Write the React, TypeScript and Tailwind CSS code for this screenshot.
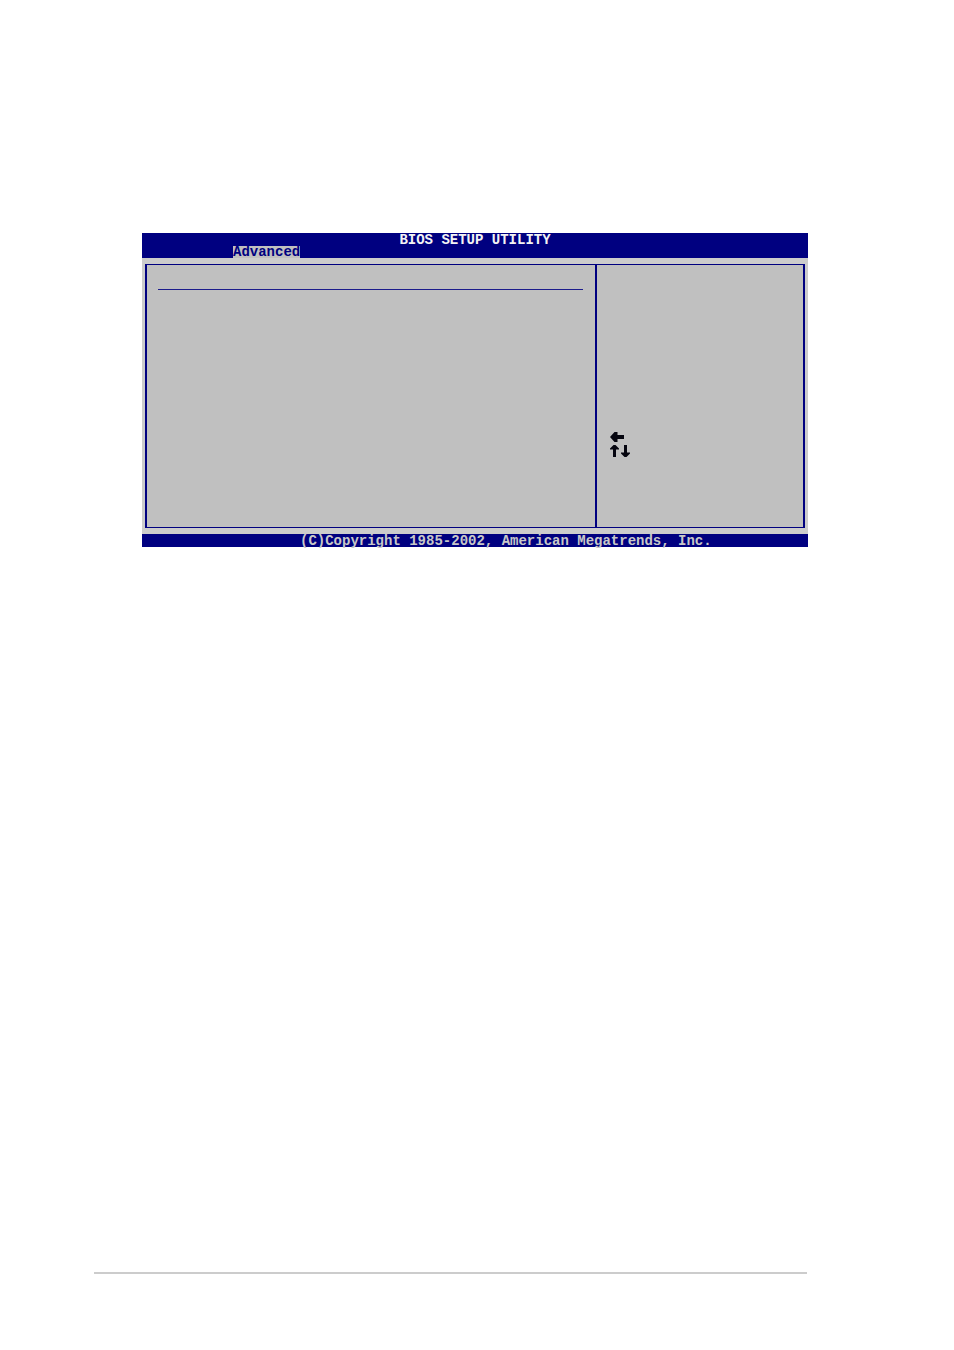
function LeftArrow() {
  return (
    <svg viewBox="0 0 14 10" className="w-[14px] h-[10px]" fill="currentColor" aria-label="Left">
      <path d="M0 5 L4.5 0 H7.5 V3 H14 V7 H7.5 V10 H4.5 Z" />
    </svg>
  )
}

function VerticalArrow({ down = false }: { down?: boolean }) {
  return (
    <svg viewBox="0 0 9 12" className="w-[9px] h-[12px]" fill="currentColor" aria-label={down ? 'Down' : 'Up'}>
      {down ? (
        <path d="M3 0 H6 V7.5 H9 V8.5 L5.5 12 H3.5 L0 8.5 V7.5 H3 Z" />
      ) : (
        <path d="M3 12 H6 V4.5 H9 V3.5 L5.5 0 H3.5 L0 3.5 V4.5 H3 Z" />
      )}
    </svg>
  )
}

export default function App() {
  return (
    <div className="min-h-screen flex flex-col bg-white pt-[233px] pb-[76px] font-['Liberation_Mono',monospace] text-[14px] leading-[15px] font-bold">
      <main className="ml-[142px] mr-[146px] bg-[#c0c0c0]">
        {/* Title and menu */}
        <header className="bg-[#000080]">
          <h1 className="h-[13px] text-center text-[#f4f4f4]">BIOS SETUP UTILITY</h1>
          <nav className="flex pl-[91px]">
            <button type="button" className="flex h-3 bg-[#c0c0c0] text-[#000080] leading-[13px]">
              Advanced
            </button>
          </nav>
        </header>

        {/* Settings and help panels */}
        <div className="px-[3px] py-1.5 bg-[#cccccc]">
          <div className="flex h-[264px] border-x-2 border-y border-[#000080] bg-[#c0c0c0]">
            <section className="flex-1 pl-[11px] pr-3 pt-6">
              <hr className="border-t border-[#1c1c8c]" />
            </section>
            <aside className="w-[208px] border-l-2 border-[#000080] pl-[13px] pt-[167px] text-[#05050f]">
              <div className="flex flex-col gap-[3px]">
                <LeftArrow />
                <div className="flex gap-0.5">
                  <VerticalArrow />
                  <VerticalArrow down />
                </div>
              </div>
            </aside>
          </div>
        </div>

        <footer className="h-[13px] bg-[#000080] pl-[158px] text-[#c8c8c8] whitespace-nowrap">
          (C)Copyright 1985-2002, American Megatrends, Inc.
        </footer>
      </main>

      <hr className="mt-auto ml-[94px] mr-[147px] border-t-2 border-[#cccccc]" />
    </div>
  )
}
